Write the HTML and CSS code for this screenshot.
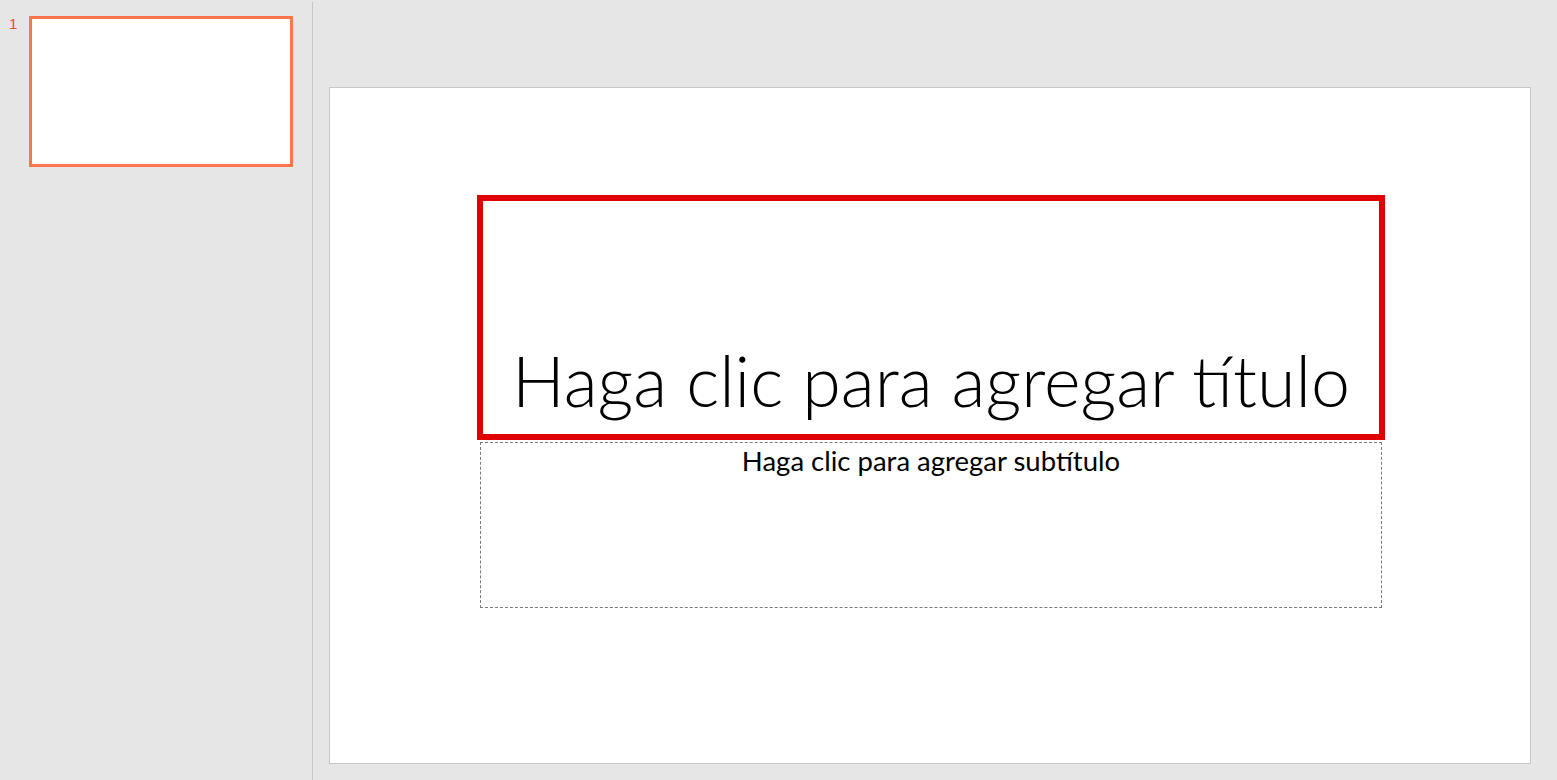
FILE: index.html
```html
<!DOCTYPE html>
<html lang="es">
<head>
<meta charset="utf-8">
<title>Presentación</title>
<link rel="stylesheet" href="styles.css">
</head>
<body>
<div class="app">
  <aside class="thumbs">
    <div class="thumb-row">
      <span class="thumb-num">1</span>
      <div class="thumb"></div>
    </div>
  </aside>
  <main class="stage">
    <div class="slide">
      <div class="title-box">
        <span class="title-text">Haga clic para agregar título</span>
      </div>
      <div class="subtitle-box">
        <span class="subtitle-text">Haga clic para agregar subtítulo</span>
      </div>
    </div>
  </main>
</div>
</body>
</html>
```
FILE: styles.css
```css
html, body {
  margin: 0;
  padding: 0;
  height: 100%;
  background: #e6e6e6;
  font-family: Lato, "Open Sans", "Liberation Sans", sans-serif;
}
.app {
  display: flex;
  height: 780px;
  width: 1557px;
  overflow: hidden;
}
.thumbs {
  width: 312px;
  flex: none;
  position: relative;
  background: #e6e6e6;
}
.thumbs::after {
  content: "";
  position: absolute;
  right: -1px;
  top: 2px;
  bottom: 0;
  width: 1px;
  background: #c6c6c6;
}
.thumb-row {
  display: flex;
  align-items: flex-start;
  padding: 16px 0 0 9px;
}
.thumb-num {
  width: 20px;
  font-size: 15px;
  line-height: 16px;
  margin-top: 0;
  color: #e4502f;
  font-family: "Liberation Sans", sans-serif;
}
.thumb {
  width: 258px;
  height: 145px;
  border: 3px solid #ff734f;
  background: #fff;
}
.stage {
  flex: 1;
  margin-left: 1px;
  padding: 87px 0 0 16px;
}
.slide {
  box-sizing: border-box;
  width: 1202px;
  height: 677px;
  background: #fff;
  border: 1px solid #c8c8c8;
  padding: 107px 0 0 147px;
  display: flex;
  flex-direction: column;
  align-items: flex-start;
}
.title-box {
  box-sizing: border-box;
  width: 908px;
  height: 245px;
  border: 6px solid #e00000;
  display: flex;
  align-items: flex-end;
  justify-content: center;
  padding-bottom: 14px;
}
.title-text {
  font-family: Lato, sans-serif;
  font-weight: 300;
  font-size: 70px;
  line-height: 80px;
  color: #000;
  white-space: nowrap;
}
.subtitle-box {
  box-sizing: border-box;
  width: 902px;
  height: 166px;
  margin: 2px 0 0 3px;
  border: 1px dashed #7a7a7a;
  display: flex;
  justify-content: center;
  padding-top: 2px;
}
.subtitle-text {
  font-family: Lato, sans-serif;
  font-size: 27.5px;
  line-height: 32px;
  color: #000;
  white-space: nowrap;
}
```
